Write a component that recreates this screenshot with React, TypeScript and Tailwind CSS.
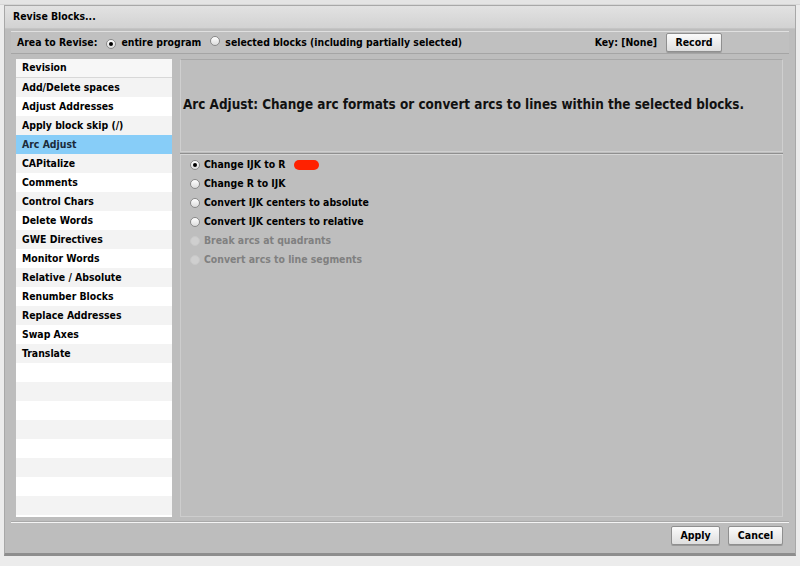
import React from 'react';

const revisions = [
  'Add/Delete spaces',
  'Adjust Addresses',
  'Apply block skip (/)',
  'Arc Adjust',
  'CAPitalize',
  'Comments',
  'Control Chars',
  'Delete Words',
  'GWE Directives',
  'Monitor Words',
  'Relative / Absolute',
  'Renumber Blocks',
  'Replace Addresses',
  'Swap Axes',
  'Translate',
  '', '', '', '', '', '', '', '',
];

const options = [
  { label: 'Change IJK to R', checked: true, disabled: false },
  { label: 'Change R to IJK', checked: false, disabled: false },
  { label: 'Convert IJK centers to absolute', checked: false, disabled: false },
  { label: 'Convert IJK centers to relative', checked: false, disabled: false },
  { label: 'Break arcs at quadrants', checked: false, disabled: true },
  { label: 'Convert arcs to line segments', checked: false, disabled: true },
];

function Radio({ checked, disabled }: { checked?: boolean; disabled?: boolean }) {
  return (
    <span
      className={
        'inline-flex items-center justify-center w-[10px] h-[10px] rounded-full border shrink-0 ' +
        (disabled
          ? 'border-[#c8c8c8] bg-[#cfcfcf]'
          : 'border-[#8a8a8a] bg-gradient-to-b from-[#ffffff] to-[#dcdcdc]')
      }
    >
      {checked && <span className="w-[4px] h-[4px] rounded-full bg-black" />}
    </span>
  );
}

function Button({ children, w }: { children: React.ReactNode; w: string }) {
  return (
    <button
      className={
        w +
        ' h-[19px] rounded-[2px] border border-[#8f8f8f] bg-gradient-to-b from-[#fbfbfb] to-[#dedede] text-[10.5px] font-bold text-black shadow-[0_1px_0_#9a9a9a]'
      }
    >
      {children}
    </button>
  );
}

export default function App() {
  return (
    <div
      className="w-[800px] h-[566px] bg-[#ececec] overflow-hidden text-black"
      style={{ fontFamily: '"DejaVu Sans Condensed", "DejaVu Sans", Verdana, sans-serif' }}
    >
      {/* strip of the window behind */}
      <div className="h-[5px] bg-[#e4e4e4] border-b border-[#d6d6d6]" />

      {/* dialog */}
      <div className="ml-[4px] w-[792px] h-[551px] bg-[#bdbdbd] border border-[#a8a8a8] border-b-[3px] border-b-[#8e8e8e] flex flex-col">
        {/* title bar */}
        <div className="h-[23px] shrink-0 bg-gradient-to-b from-[#e2e2e2] to-[#d2d2d2] border-b border-[#c4c4c4] flex items-center pl-[8px] text-[10.4px] font-bold">
          Revise Blocks...
        </div>

        {/* area to revise bar */}
        <div className="mx-[6px] mt-[2px] h-[23px] shrink-0 bg-[#c0c0c0] border-t border-[#e0e0e0] border-b border-b-[#a5a5a5] flex items-center pl-[6px] pr-[67px] text-[10.4px] font-bold">
          <span>Area to Revise:</span>
          <span className="ml-[9px]"><Radio checked /></span>
          <span className="ml-[5px]">entire program</span>
          <span className="ml-[9px]"><Radio /></span>
          <span className="ml-[5px]">selected blocks (including partially selected)</span>
          <span className="ml-auto">Key: [None]</span>
          <span className="ml-[9px]"><Button w="w-[56px]">Record</Button></span>
        </div>

        {/* main area */}
        <div className="flex mt-[5px] ml-[11px] mr-[12px] h-[458px] gap-[8px]">
          {/* revision list */}
          <div className="w-[156px] shrink-0 bg-white flex flex-col overflow-hidden text-[10.4px] font-bold">
            <div className="h-[19px] shrink-0 flex items-center pl-[6px] bg-[#f7f7f7] border-b border-[#d8d8d8]">
              Revision
            </div>
            {revisions.map((r, i) => (
              <div
                key={i}
                className={
                  'h-[19px] shrink-0 flex items-center pl-[6px] ' +
                  (r === 'Arc Adjust'
                    ? 'bg-[#87cdf8] text-[#1a2a3a]'
                    : i % 2 === 0
                    ? 'bg-[#f3f3f3]'
                    : 'bg-white')
                }
              >
                {r}
              </div>
            ))}
          </div>

          {/* right pane */}
          <div className="flex-1 flex flex-col">
            <div className="h-[93px] shrink-0 bg-[#bebebe] border border-[#cfcfcf] border-t-[#a8a8a8] flex items-center pl-[2px] text-[13.4px] font-bold text-[#111] whitespace-nowrap">
              Arc Adjust: Change arc formats or convert arcs to lines within the selected blocks.
            </div>
            <div className="h-[2px] mt-[1px] bg-[#8f8f8f] border-b border-[#d6d6d6]" />
            <div className="flex-1 bg-[#bebebe] border border-[#cdcdcd] border-t-0 pl-[9px] text-[10.4px] font-bold">
              {options.map((o, i) => (
                <div
                  key={i}
                  className={'h-[19px] flex items-center gap-[4px] ' + (o.disabled ? 'text-[#808080]' : 'text-black')}
                >
                  <Radio checked={o.checked} disabled={o.disabled} />
                  <span>{o.label}</span>
                  {i === 0 && <span className="ml-[4px] w-[25px] h-[10px] rounded-full bg-[#ff2200]" />}
                </div>
              ))}
            </div>
          </div>
        </div>

        {/* footer */}
        <div className="mx-[6px] mt-[4px] h-[2px] bg-[#a9a9a9] border-b border-[#f4f4f4]" />
        <div className="flex justify-end gap-[8px] mr-[12px] mt-[3px]">
          <Button w="w-[49px]">Apply</Button>
          <Button w="w-[55px]">Cancel</Button>
        </div>
      </div>
    </div>
  );
}
